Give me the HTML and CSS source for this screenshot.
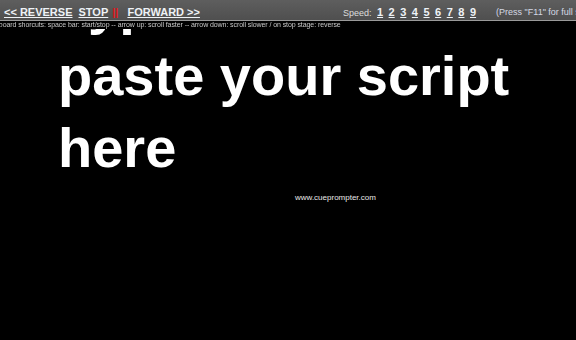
FILE: index.html
```html
<!DOCTYPE html>
<html lang="en">
<head>
    <meta charset="UTF-8">
    <title>CuePrompter</title>
    <link rel="stylesheet" href="styles.css">
</head>
<body>
    <!-- control bar over the scrolling text -->
    <div class="controls">
        <div class="bar">
            <div class="nav">
                <a href="#">&lt;&lt; REVERSE</a>
                <a href="#">STOP</a>
                <span class="pause">||</span>
                <a href="#">FORWARD &gt;&gt;</a>
            </div>
            <div class="speed">
                <span class="label">Speed:</span>
                <a href="#">1</a><a href="#">2</a><a href="#">3</a><a href="#">4</a><a href="#">5</a><a href="#">6</a><a href="#">7</a><a href="#">8</a><a href="#">9</a>
            </div>
            <div class="fullscreen">(Press "F11" for full screen)</div>
        </div>
        <div class="hint">Keyboard shorcuts: space bar: start/stop -- arrow up: scroll faster -- arrow down: scroll slower / on stop stage: reverse</div>
    </div>

    <div class="script">
        <p>Type or</p>
        <p>paste your script</p>
        <p>here</p>
    </div>
    <div class="site">www.cueprompter.com</div>
</body>
</html>
```

FILE: styles.css
```css
body {
    margin: 0;
    background: #000;
    color: #fff;
    overflow: hidden;
    font-family: "Liberation Sans", Arial, sans-serif;
}
.controls {
    position: fixed;
    top: 0;
    left: 0;
    right: 0;
    z-index: 2;
}
.bar {
    display: flex;
    align-items: center;
    height: 20px;
    background: linear-gradient(#5e5e5e, #555 60%, #4f4f4f);
    border-bottom: 1px solid #9a9a9a;
    white-space: nowrap;
    overflow: hidden;
}
.nav {
    display: flex;
    gap: 6px;
    padding-left: 4px;
    padding-top: 3px;
    font-size: 11px;
    font-weight: bold;
}
.nav a, .speed a {
    color: #eef2f6;
    text-decoration: underline;
}
.pause {
    color: #e0161b;
    margin-left: -2px;
    margin-right: 3px;
}
.speed {
    display: flex;
    align-items: baseline;
    gap: 5.5px;
    margin-left: 143px;
    padding-top: 3px;
    font-size: 11px;
    font-weight: bold;
}
.speed .label {
    font-size: 9px;
    font-weight: normal;
    color: #ddd;
    margin-right: 0;
}
.fullscreen {
    margin-left: 20px;
    padding-top: 3px;
    font-size: 9px;
    color: #d4d8e4;
}
.hint {
    margin-left: -13px;
    height: 8px;
    line-height: 8px;
    font-size: 7px;
    letter-spacing: -0.08px;
    color: #c8c8c8;
    background: #000;
    white-space: nowrap;
}
.script {
    margin-top: -32px;
    padding-left: 58px;
    font-size: 56px;
    font-weight: bold;
    line-height: 72px;
}
.script p {
    margin: 0;
}
.site {
    margin-top: 9px;
    padding-left: 295px;
    font-size: 8px;
    color: #e8e8e8;
}
```
